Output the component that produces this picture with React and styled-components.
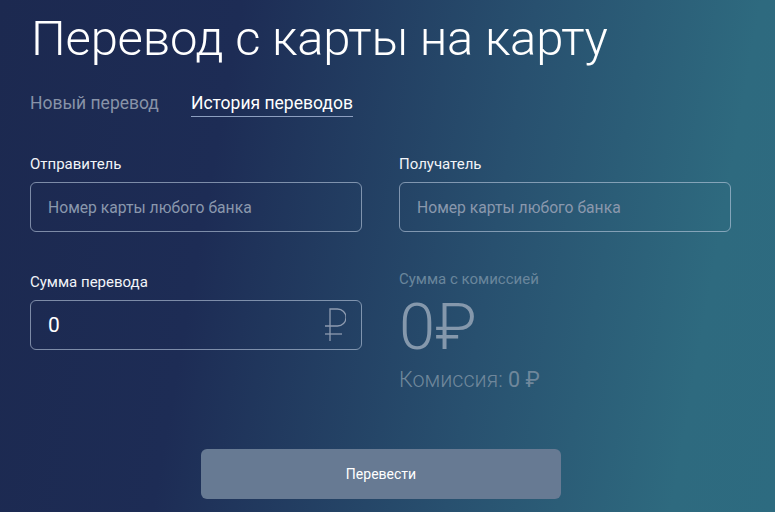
import React from "react";
import styled, { createGlobalStyle } from "styled-components";

const GlobalStyle = createGlobalStyle`
  html, body {
    margin: 0;
    padding: 0;
  }
  body {
    font-family: Roboto, "Liberation Sans", sans-serif;
    background: #1c2950;
  }
`;

const Page = styled.div`
  width: 775px;
  height: 512px;
  overflow: hidden;
  box-sizing: border-box;
  padding: 4px 0 0 30px;
  color: #fff;
  background: linear-gradient(100deg, #1c2950 0%, #1d2c55 28%, #28506f 62%, #2e6a7f 88%, #2d6b80 100%);
`;

const Title = styled.h1`
  margin: 0 0 0 1px;
  font-size: 49px;
  font-weight: 300;
  line-height: 70px;
  letter-spacing: -0.2px;
  color: #fff;
`;

const Tabs = styled.div`
  display: flex;
  gap: 32px;
  margin-top: 18px;
`;

const Tab = styled.div`
  font-size: 17.5px;
  line-height: 22px;
  padding-bottom: 2px;
  color: ${p => (p.active ? "#fff" : "#8893a8")};
  border-bottom: 1px solid ${p => (p.active ? "#8d9fc0" : "transparent")};
`;

const Form = styled.div`
  display: grid;
  grid-template-columns: 332px 332px;
  column-gap: 37px;
  row-gap: 41px;
  margin-top: 38px;
`;

const Field = styled.div`
  display: flex;
  flex-direction: column;
`;

const Label = styled.div`
  font-size: 15px;
  line-height: 18px;
  margin: ${p => (p.dim ? "-3px 0 7px" : "0 0 9px")};
  color: ${p => (p.dim ? "#6a869c" : "#f2f4f8")};
`;

const InputBox = styled.div`
  height: 50px;
  box-sizing: border-box;
  border: 1px solid rgba(190, 205, 225, 0.6);
  border-radius: 6px;
  display: flex;
  align-items: center;
  justify-content: space-between;
  padding: 0 15px 0 17px;
`;

const Placeholder = styled.span`
  font-size: 15.7px;
  color: #8a98ad;
`;

const Amount = styled.span`
  font-size: 21px;
  color: #fff;
`;

const Total = styled.div`
  font-size: 65px;
  font-weight: 300;
  line-height: 65px;
  color: #8598ac;
`;

const Commission = styled.div`
  font-size: 21.5px;
  font-weight: 300;
  line-height: 25px;
  margin-top: 6.5px;
  color: #6f879b;
  b {
    font-weight: 400;
  }
`;

const ButtonRow = styled.div`
  display: flex;
  padding-left: 171px;
  margin-top: 57.5px;
`;

const Button = styled.button`
  width: 360px;
  height: 50px;
  border: none;
  border-radius: 6px;
  background: #677a93;
  color: #fff;
  font-family: Roboto, "Liberation Sans", sans-serif;
  font-size: 14px;
`;

const RubleIcon = () => (
  <svg width="22" height="36" viewBox="0 0 22 36" fill="none" stroke="#8e9bb0" strokeWidth="1.3">
    <path d="M6 34V2h7.5a8.5 8.5 0 0 1 0 17H1" />
    <path d="M1 27h17" />
  </svg>
);

export default function App() {
  return (
    <Page>
      <GlobalStyle />
      <Title>Перевод с карты на карту</Title>
      <Tabs>
        <Tab>Новый перевод</Tab>
        <Tab active>История переводов</Tab>
      </Tabs>
      <Form>
        <Field>
          <Label>Отправитель</Label>
          <InputBox>
            <Placeholder>Номер карты любого банка</Placeholder>
          </InputBox>
        </Field>
        <Field>
          <Label>Получатель</Label>
          <InputBox>
            <Placeholder>Номер карты любого банка</Placeholder>
          </InputBox>
        </Field>
        <Field>
          <Label>Сумма перевода</Label>
          <InputBox>
            <Amount>0</Amount>
            <RubleIcon />
          </InputBox>
        </Field>
        <Field>
          <Label dim>Сумма с комиссией</Label>
          <Total>0₽</Total>
          <Commission>
            Комиссия: <b>0 ₽</b>
          </Commission>
        </Field>
      </Form>
      <ButtonRow>
        <Button>Перевести</Button>
      </ButtonRow>
    </Page>
  );
}
